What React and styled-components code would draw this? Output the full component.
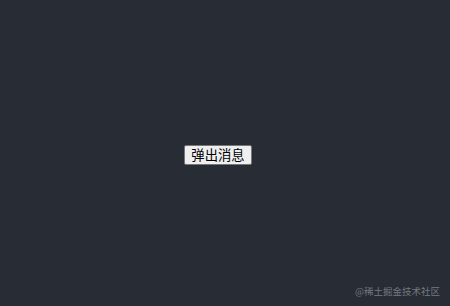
import React from "react";
import styled, { createGlobalStyle } from "styled-components";

const Global = createGlobalStyle`
  html, body { margin: 0; padding: 0; height: 100%; }
  body { background: #282c34; font-family: "Noto Sans CJK SC", "Noto Sans", sans-serif; }
  #root { height: 100%; }
`;

const Page = styled.div`
  position: relative;
  height: 306px;
  display: flex;
  align-items: center;
  justify-content: center;
  padding-right: 14px;
  padding-top: 4px;
  box-sizing: border-box;
`;

const Button = styled.button`
  font-family: "Noto Sans CJK SC", sans-serif;
  font-size: 13.333px;
  line-height: 18px;
  color: #000;
  background: #efefef;
  border: 1px solid #767676;
  border-radius: 2px;
  padding: 0 6px;
  cursor: pointer;
`;

const Watermark = styled.div`
  position: absolute;
  right: 10px;
  bottom: 8px;
  font-family: "Noto Sans CJK SC", sans-serif;
  font-size: 9.5px;
  line-height: 14px;
  color: rgba(170, 174, 182, 0.6);
  white-space: nowrap;
`;

export default function App() {
  return (
    <>
      <Global />
      <Page>
        <Button>弹出消息</Button>
        <Watermark>@稀土掘金技术社区</Watermark>
      </Page>
    </>
  );
}
